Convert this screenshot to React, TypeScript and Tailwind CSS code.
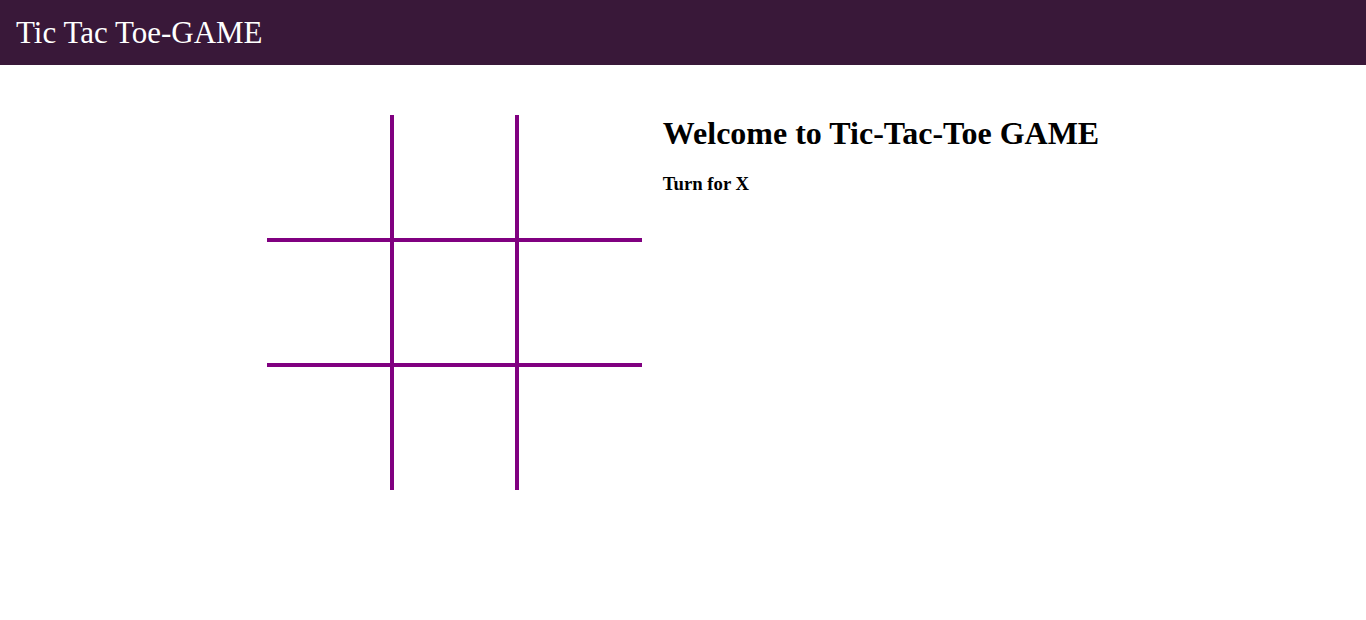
const cells = [
  "border-r-2 border-b-2",
  "border-x-2 border-b-2",
  "border-l-2 border-b-2",
  "border-r-2 border-y-2",
  "border-2",
  "border-l-2 border-y-2",
  "border-r-2 border-t-2",
  "border-x-2 border-t-2",
  "border-l-2 border-t-2",
];

export default function App() {
  return (
    <div className="min-h-screen bg-white font-['Liberation_Serif','Times_New_Roman',serif] leading-[normal] text-black">
      <nav className="flex h-[65px] items-center bg-[#391839] px-4">
        <span className="text-[31px] text-white">Tic Tac Toe-GAME</span>
      </nav>

      <main className="flex justify-center gap-[21px] pt-[50px]">
        <div className="grid grid-cols-[repeat(3,125px)] grid-rows-[repeat(3,125px)]">
          {cells.map((c, i) => (
            <div key={i} className={`box-border border-solid border-[#800080] ${c}`}></div>
          ))}
        </div>

        <div>
          <h1 className="mb-[21px] text-[32px] font-bold">Welcome to Tic-Tac-Toe GAME</h1>
          <h3 className="text-[18.72px] font-bold">Turn for X</h3>
        </div>
      </main>
    </div>
  );
}
